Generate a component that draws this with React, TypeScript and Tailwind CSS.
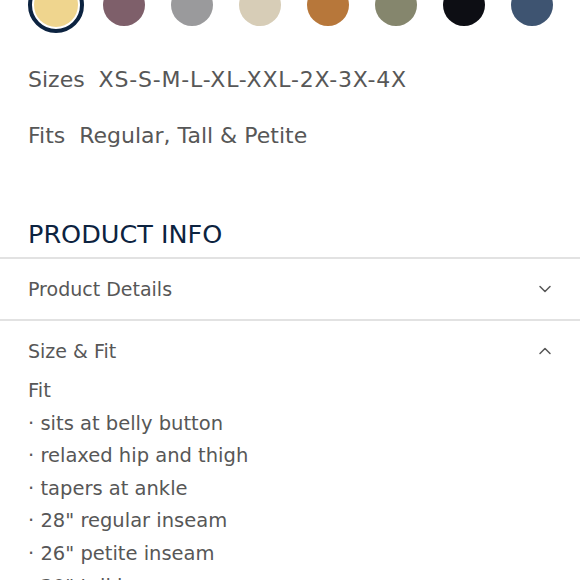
import { ChevronDown, ChevronUp } from "lucide-react";

const swatches = [
  "#efd58e",
  "#7e5f6a",
  "#9a9a9c",
  "#d7cdb7",
  "#b7773a",
  "#85866d",
  "#0d0e14",
  "#3e5471",
];

const fitLines = [
  "sits at belly button",
  "relaxed hip and thigh",
  "tapers at ankle",
  '28" regular inseam',
  '26" petite inseam',
  '30" tall inseam',
];

export default function App() {
  return (
    <div className="h-[580px] w-[580px] overflow-hidden bg-white font-['DejaVu_Sans',sans-serif] text-[#575757]">
      <div className="-mt-[23px] flex items-center gap-[26px] pl-[35px]">
        {swatches.map((color, i) =>
          i === 0 ? (
            <div
              key={color}
              className="-ml-[7px] -mr-[7px] flex h-[56px] w-[56px] items-center justify-center rounded-full border-[4px] border-[#0c2340] bg-white"
            >
              <div className="h-[44px] w-[44px] rounded-full" style={{ backgroundColor: color }} />
            </div>
          ) : (
            <div key={color} className="h-[42px] w-[42px] rounded-full" style={{ backgroundColor: color }} />
          )
        )}
      </div>

      <div className="px-[28px] pt-[33px] text-[22px] leading-[28px]">
        <p>
          Sizes&nbsp; <span className="tracking-[0.8px]">XS-S-M-L-XL-XXL-2X-3X-4X</span>
        </p>
        <p className="mt-[28px]">Fits&nbsp; Regular, Tall &amp; Petite</p>
      </div>

      <h2 className="mt-[68px] px-[28px] text-[25.5px] leading-[32px] text-[#0c2340]">PRODUCT INFO</h2>

      <div className="mt-[7px] border-t-2 border-[#e2e2e2]">
        <div className="flex h-[60px] items-center justify-between pl-[28px] pr-[25px] text-[19px]">
          <span>Product Details</span>
          <ChevronDown size={20} strokeWidth={1.8} />
        </div>
      </div>

      <div className="border-t-2 border-[#e2e2e2]">
        <div className="flex h-[60px] items-center justify-between pl-[28px] pr-[25px] text-[19px]">
          <span>Size &amp; Fit</span>
          <ChevronUp size={20} strokeWidth={1.8} />
        </div>
        <div className="-mt-[6px] px-[28px] text-[19.5px] leading-[32.6px]">
          <p>Fit</p>
          {fitLines.map((line) => (
            <p key={line}>· {line}</p>
          ))}
        </div>
      </div>
    </div>
  );
}
